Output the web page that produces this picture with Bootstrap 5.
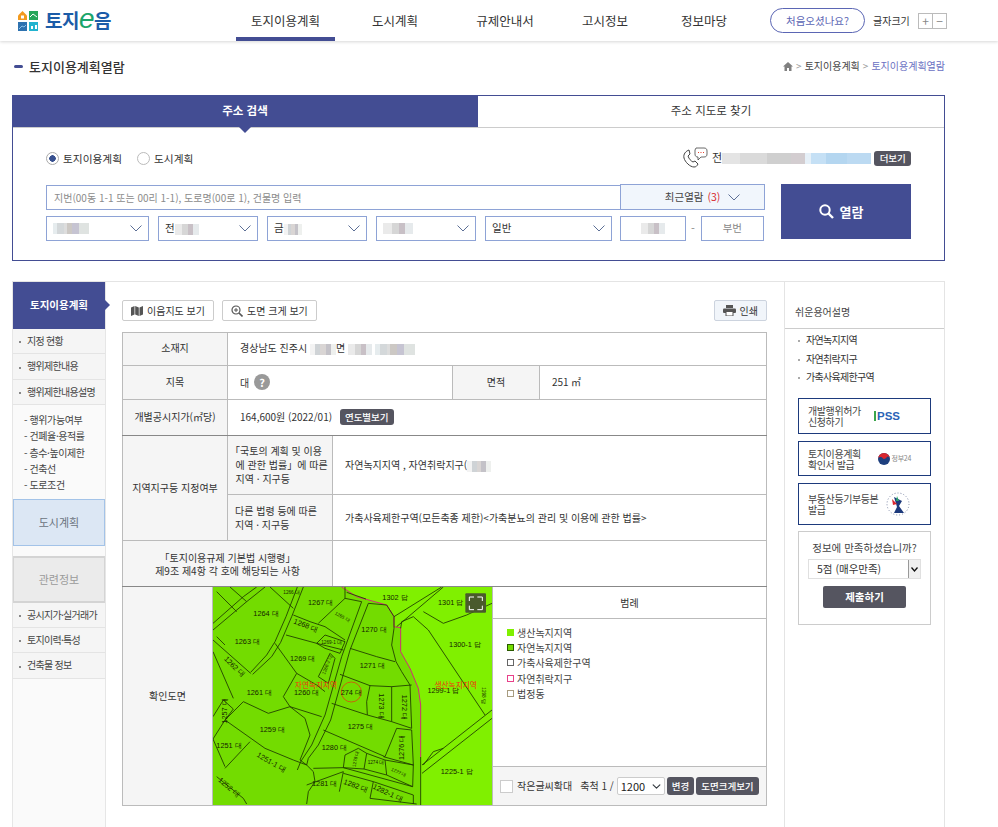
<!DOCTYPE html>
<html lang="ko">
<head>
<meta charset="utf-8">
<title>토지이용계획열람</title>
<link href="https://cdn.jsdelivr.net/npm/bootstrap@5.3.0/dist/css/bootstrap.min.css" rel="stylesheet">
<style>
html,body{height:827px;overflow:hidden}
body{font-family:"Noto Sans CJK KR","Noto Sans",sans-serif;font-size:11px;color:#333;background:#fff;line-height:1.4}
.site-head{height:41px;box-shadow:0 1px 3px rgba(0,0,0,.16);padding-left:18px;position:relative}
.brand{width:218px;color:#1b5ca8;font-size:19px;font-weight:700;letter-spacing:-.5px;text-decoration:none;gap:7px}
.brand i{font-style:italic;font-weight:400;color:#1ba56b;font-size:28px;line-height:1;font-family:"Liberation Sans",sans-serif;margin:-4px 0 0}
.gnav{width:534px;height:41px}
.gnav a{color:#333;font-size:12.5px;text-decoration:none;height:41px;line-height:41px;text-align:center;display:block}
.gnav a.on{border-bottom:4px solid #434d93}
.gn1{width:99px}.gn2{width:120px}.gn3{width:100px}.gn4{width:100px}.gn5{width:98px}
.first-btn{width:95px;height:25px;border:1px solid #5b66b4;border-radius:13px;color:#5b66b4;font-size:10.5px;line-height:23px;text-align:center;text-decoration:none}
.fs-label{font-size:10px;margin-left:8px;color:#333;width:45px}
.fs-box{width:15px;height:16px;border:1px solid #bbb;color:#888;font-size:12px;line-height:13px;text-align:center;margin-right:-1px}
.title-row{padding:18px 53px 0 14px;height:54px}
.title-row h1{font-size:13px;font-weight:500;margin:0;color:#333}
.dash{width:9px;height:3px;background:#434d93;border-radius:2px;margin-right:6px}
.crumb{font-size:10px;color:#444}
.crumb b{font-weight:400}
.crumb .sep{color:#999;margin:0 3px}
.crumb .cur{color:#6a70c2}
.search-box{margin-left:12px;width:933px;height:166px;border:1px solid #434d93;position:relative}
.tab-row{height:32px;border-bottom:1px solid #ccc}
.tab-on{width:466px;background:#434d93;color:#fff;font-weight:700;font-size:11.5px;line-height:31px;text-align:center;position:relative;height:32px;margin-left:-1px;margin-top:-1px}
.tab-on::after{content:"";position:absolute;left:50%;bottom:-6px;margin-left:-6px;border:6px solid transparent;border-bottom:0;border-top-color:#434d93}
.tab-off{flex:1;text-align:center;line-height:30px;font-size:11.5px;margin-top:-1px}
.search-body{padding:0 33px;position:relative}
.radio-row{height:56px;padding-top:4px}
.form-check-input.rad{width:13px;height:13px;margin:0 4px 0 0;border-color:#bbb;float:none}
.form-check-input.rad:checked{background-color:#fff;border-color:#aaa;background-image:radial-gradient(circle,#37508f 0 3px,transparent 3.5px)}
.radio-lab{margin-right:15px;font-size:10.7px}
.tel-row{position:absolute;left:669px;top:19px;width:242px}
.tag-dark{background:#555560;color:#fff;border-radius:3px;font-size:9.5px;font-weight:500;display:inline-block;padding:0 5px;line-height:15px}
.tel-more{margin-left:3px;height:15px;padding:0 5.5px}
.blur{display:inline-block;vertical-align:middle;height:11px;background-size:100% 100%}
.bl2{background:linear-gradient(90deg,#f3f3f3 0 20%,#cfd3d6 20% 40%,#d9d5d4 40% 60%,#c4c2c8 60% 80%,#eef0ee 80% 100%)}
.bl3{background:linear-gradient(90deg,#e6ecee 0 12%,#d4d8da 12% 30%,#ddd 30% 38%,#ccc8c4 38% 54%,#c6c4d2 54% 72%,#dfe3e1 72% 100%)}
.bl4{background:linear-gradient(90deg,#eaeaea 0 30%,#d6d6d6 30% 55%,#c8c0c6 55% 75%,#e6eaec 75% 100%)}
.bl-tel{background:linear-gradient(90deg,#e4e4e4 0 12%,#dadada 12% 30%,#cfcfcf 30% 46%,#d3cdd0 46% 56%,#e6f0f8 56% 60%,#c5e0f5 60% 70%,#b4d6f0 70% 84%,#bcdaf2 84% 100%)}
.addr-grp{width:719px;height:26px}
.addr-input{width:575px;height:25px;border:1px solid #8ea3d6;border-right:0;border-radius:0;font-size:10px;padding:0 7px;margin-top:1px;background:#fff;color:#333;min-height:0}
.addr-input::placeholder{color:#8b8b8b}
.recent{width:145px;height:26px;border:1px solid #8ea3d6;background:#f1f6fc;font-size:10.5px;color:#444;border-radius:0;padding:0 0 0 20px}
.recent em{font-style:normal;color:#d8262e;margin:0 8px 0 1px}
.fld-row{gap:9px;margin-top:6px;width:719px}
.sel{height:25px;border:1px solid #8ea3d6;border-radius:0;font-size:10.5px;padding:0 6px;color:#333;display:flex;align-items:center;background:#fff;justify-content:space-between}
.s1{width:103px}.s2,.s3,.s4{width:100px}.s5{width:127px}
.s6{width:66px;justify-content:center;margin-left:-1px}
.s7{width:63px;justify-content:center;color:#888}
.dashc{color:#888;margin:0 -3px 0 -4px;line-height:25px}
.go-btn{position:absolute;left:768px;top:56px;width:130px;height:55px;background:#434d93;color:#fff;font-size:13px;font-weight:700;border:0;border-radius:0;gap:6px;padding:0 10px 0 0}
.go-btn:hover{background:#434d93;color:#fff}
.main-wrap{margin:20px 0 0 12px;width:933px;height:546px;border-top:1px solid #e4e4e4}
.side{width:94px;background:#fafafa;border-left:1px solid #e6e6e6;border-right:1px solid #e6e6e6}
.side-head{height:47px;background:#434d93;color:#fff;font-weight:700;font-size:10.5px;line-height:45px;text-align:center;position:relative}
.side-head::after{content:"";position:absolute;right:-5px;top:18px;border:5px solid transparent;border-right:0;border-left-color:#434d93}
.side-it{height:25.3px;background:#f5f5f5;border-bottom:1px solid #e4e4e4;font-size:10px;letter-spacing:-.7px;line-height:24px;color:#444;padding-left:6px;white-space:nowrap}
.side-it::before{content:"";display:inline-block;width:2px;height:2px;background:#888;margin-right:6px;vertical-align:middle}
.sub-list{padding:7px 0 0 11px;height:94px;margin:0}
.sub-list li{height:16.4px;font-size:10px;letter-spacing:-.4px;line-height:16.4px;color:#444;white-space:nowrap}
.box-city{height:47px;background:#dce7f4;border:1px solid #a3c3e8;color:#6b7480;font-size:11px;text-align:center;line-height:45px}
.box-rel{height:47px;background:#ebebeb;border:1px solid #d4d4d4;border-width:2px 1px;color:#9a9a9a;font-size:11px;text-align:center;line-height:43px;margin-top:10px}
.center-col{width:678px;padding:18px 17px 0 16px}
.tool-row{height:32px;margin-bottom:0}
.tool-btn{height:21px;background:#fff;border:1px solid #ccc;border-radius:2px;font-size:10px;padding:0 8px;color:#333;gap:4px;line-height:1}
.tool-btn.print{background:#f1f5fa;border-color:#ccd3de;padding:0 8px}
.info-tbl{width:645px;table-layout:fixed;border-collapse:collapse;margin:0;font-size:10px;border:1px solid #bbb;border-top:1px solid #888}
.info-tbl th,.info-tbl td{border:1px solid #bbb;padding:0 12px;vertical-align:middle;font-weight:400;color:#333;line-height:14px}
.info-tbl th{background:#f5f5f5;text-align:center;padding:0 4px;--bs-table-bg:#f5f5f5}
.info-tbl tr.lift th,.info-tbl tr.lift td{padding-bottom:2px}
.info-tbl th.lft{text-align:left;padding-left:7px;white-space:nowrap}
.info-tbl th.tight{line-height:13px}
.info-tbl td.dk,.info-tbl th.dk{border-bottom-color:#888}
.info-tbl .maprow{padding:0;border-top-color:#888}
.qmark{display:inline-block;width:16px;height:16px;border-radius:50%;background:#999;color:#fff;font-weight:700;text-align:center;line-height:16px;font-size:11px;margin-left:2px}
.price-tag{line-height:16px;margin-left:5px}
.map-grid{display:grid;grid-template-columns:90px 279px 1fr;height:218px}
.map-lab{background:#f5f5f5;display:flex;align-items:center;justify-content:center;border-right:1px solid #bbb}
.map-pic{display:block;width:279px;height:218px;background:#80f000}
.legend{border-left:1px solid #bbb;display:flex;flex-direction:column}
.leg-head{height:32px;line-height:31px;text-align:center;border-bottom:1px solid #bbb}
.leg-list{flex:1;padding:6px 0 0 14px;margin:0}
.leg-list li{height:15.2px;line-height:15px;display:flex;align-items:center;color:#444}
.sw{width:7px;height:7px;margin-right:3px;display:inline-block;border:1px solid}
.leg-foot{height:39px;background:#f5f5f5;border-top:1px solid #bbb;padding-left:7px;white-space:nowrap}
.leg-check{width:13px;height:13px;border:1px solid #ccc;background:#fff;margin-right:4px}
.scale-sel{width:48px;height:18px;font-size:11px;margin:0 0 0 3px;padding:0 0 0 3px;border:1px solid #ccc;border-radius:2px;background-color:#fff;background-position:right 3px center;background-size:9px;min-height:0;color:#222}
.scale-txt{margin-left:8px}
.leg-foot .tag-dark{border-radius:3px;line-height:18px;height:18px;margin-left:2px;padding:0 5px;font-size:9.5px;flex-shrink:0}
.right-col{width:161px;border-left:1px solid #e4e4e4;border-right:1px solid #e4e4e4}
.easy-head{height:47px;border-bottom:1px solid #ccc;padding:22px 0 0 10px;font-size:10px;color:#444;line-height:16px}
.easy-list{padding:2px 0 0 13px;margin:0 0 7px;height:62px}
.easy-list li{height:18.6px;line-height:18.6px;font-size:10px;letter-spacing:-.7px;color:#333;white-space:nowrap}
.easy-list li::before{content:"";display:inline-block;width:2px;height:2px;background:#aaa;margin-right:6px;vertical-align:middle}
.ext-link{margin:0 0 7px 13px;width:133px;border:1px solid #1d3a7c;padding:0 8px 0 9px;font-size:10px;letter-spacing:-.4px;line-height:11px;color:#444;text-decoration:none;justify-content:space-between}
.e1{height:36px}.e2{height:35px}.e3{height:42px;margin-bottom:6px}
.ipss{color:#2a63b7;font-family:"Liberation Sans",sans-serif;font-weight:700;font-size:11.5px;letter-spacing:0;border-left:2px solid #3aa54b;padding-left:1px;line-height:10px;margin-right:22px}
.gov24{font-size:7px;color:#888;gap:2px;white-space:nowrap;letter-spacing:-.3px;margin-right:11px}
.reg-logo{margin-right:12px;flex-shrink:0}
.sat-box{margin-left:13px;width:133px;height:94px;border:1px solid #ccc;padding:8px 9px;text-align:center}
.sat-box p{font-size:10.5px;margin:0 0 2px;line-height:16px;color:#444;white-space:nowrap}
.sat-sel{height:20px;font-size:10.5px;padding:0 0 0 8px;border:1px solid #e0e0e0;border-radius:0;width:113px;min-height:0;margin-top:3px;color:#333;display:flex;align-items:center;justify-content:space-between;text-align:left}
.sat-arrow{width:12px;height:18px;background:#f0f0f0;border-left:1px solid #999;display:flex;align-items:center;justify-content:center}
.sat-go{width:83px;height:22px;margin-top:7px;background:#555560;color:#fff;border:0;border-radius:2px;font-size:10.5px;font-weight:700;padding:0}
.sat-go:hover{background:#555560;color:#fff}
.mt{font-family:"Liberation Sans",sans-serif;font-size:22px;fill:#141f00;text-anchor:middle}
.ms{font-size:14px}
.mr{font-family:"Noto Sans CJK KR",sans-serif;font-size:23px;fill:#f03010;text-anchor:middle}
.ml{fill:none;stroke:#1f3b00;stroke-width:2.6}
</style>
</head>
<body>
<header class="site-head d-flex align-items-center">
  <a class="brand d-flex align-items-center" href="#">
    <svg width="20" height="20" viewBox="0 0 20 20"><path d="M0 4.500 4.500 0 9 4.500V9H0z" fill="#f39a1e"/><rect x="3" y="4.500" width="3" height="3" fill="#fff"/><rect x="11" y="0" width="9" height="9" fill="#27a65a"/><path d="M12 6l3-3 4 3" fill="none" stroke="#fff"/><rect x="0" y="11" width="9" height="9" fill="#2e72b0"/><path d="M1 18l3-3 2 1 2-2" fill="none" stroke="#8cc0e8"/><rect x="11" y="11" width="9" height="9" fill="#22b3cf"/><path d="M13 15h2v3h-2zM17 14h2v4h-2z" fill="#fff"/></svg>
    <span class="d-flex align-items-center">토지<i>e</i>음</span>
  </a>
  <nav class="gnav d-flex">
    <a class="gn1 on" href="#">토지이용계획</a>
    <a class="gn2" href="#">도시계획</a>
    <a class="gn3" href="#">규제안내서</a>
    <a class="gn4" href="#">고시정보</a>
    <a class="gn5" href="#">정보마당</a>
  </nav>
  <a class="first-btn" href="#">처음오셨나요?</a>
  <span class="fs-label">글자크기</span>
  <span class="fs-box">+</span><span class="fs-box">−</span>
</header>

<div class="title-row d-flex justify-content-between align-items-start">
  <div class="d-flex align-items-center"><span class="dash"></span><h1>토지이용계획열람</h1></div>
  <div class="crumb d-flex align-items-center">
    <svg width="10" height="9" viewBox="0 0 10 9"><path d="M5 0 10 4.500H8.500V9H6V6H4v3H1.500V4.500H0z" fill="#808080"/></svg>
    <span class="sep">&gt;</span><b>토지이용계획</b><span class="sep">&gt;</span><span class="cur">토지이용계획열람</span>
  </div>
</div>

<section class="search-box">
  <div class="tab-row d-flex">
    <div class="tab-on">주소 검색</div>
    <div class="tab-off">주소 지도로 찾기</div>
  </div>
  <div class="search-body">
    <div class="radio-row d-flex align-items-center">
      <input class="form-check-input rad" type="radio" name="kind" checked><span class="radio-lab">토지이용계획</span>
      <input class="form-check-input rad" type="radio" name="kind"><span class="radio-lab">도시계획</span>
    </div>
    <div class="tel-row d-flex align-items-center">
      <svg width="26" height="22" viewBox="0 0 26 22" class="me-1 flex-shrink-0"><path d="M7 3C4 4 1 7 2 11s6 9 10 9c2 0 3-1 4-3l-3-3-2 1c-2-1-4-3-5-6l2-2z" fill="none" stroke="#444" stroke-width="1"/><path d="M14 1h8c2 0 3 1 3 3v3c0 2-1 3-3 3h-3l-3 3v-3c-2 0-3-1-3-3V3z" fill="#fff" stroke="#444" stroke-width=".8"/><path d="M16 5.500h1M18.500 5.500h1M21 5.500h1" stroke="#e8432e" stroke-width="1.200"/></svg>
      <span>전</span><span class="blur bl-tel" style="width:149px"></span>
      <span class="tag-dark tel-more">더보기</span>
    </div>
    <div class="addr-grp d-flex">
      <input class="form-control addr-input" type="text" placeholder="지번(00동 1-1 또는 00리 1-1), 도로명(00로 1), 건물명 입력">
      <button class="btn recent d-flex align-items-center justify-content-center" type="button">최근열람&nbsp;<em>(3)</em>
        <svg width="12" height="7" viewBox="0 0 12 7"><path d="M.5.500 6 6 11.500.500" fill="none" stroke="#5c6f96"/></svg></button>
    </div>
    <div class="fld-row d-flex">
      <div class="sel s1"><span class="blur bl3" style="width:36px"></span><svg width="12" height="7" viewBox="0 0 12 7"><path d="M.5.500 6 6 11.500.500" fill="none" stroke="#5c6f96"/></svg></div>
      <div class="sel s2"><span>전<span class="blur bl4" style="width:24px"></span></span><svg width="12" height="7" viewBox="0 0 12 7"><path d="M.5.500 6 6 11.500.500" fill="none" stroke="#5c6f96"/></svg></div>
      <div class="sel s3"><span>금<span class="blur bl2" style="width:18px"></span></span><svg width="12" height="7" viewBox="0 0 12 7"><path d="M.5.500 6 6 11.500.500" fill="none" stroke="#5c6f96"/></svg></div>
      <div class="sel s4"><span class="blur bl4" style="width:30px"></span><svg width="12" height="7" viewBox="0 0 12 7"><path d="M.5.500 6 6 11.500.500" fill="none" stroke="#5c6f96"/></svg></div>
      <div class="sel s5"><span>일반</span><svg width="12" height="7" viewBox="0 0 12 7"><path d="M.5.500 6 6 11.500.500" fill="none" stroke="#5c6f96"/></svg></div>
      <div class="sel s6"><span class="blur bl4" style="width:24px"></span></div>
      <span class="dashc">-</span>
      <div class="sel s7">부번</div>
    </div>
    <button class="btn go-btn d-flex align-items-center justify-content-center" type="button">
      <svg width="15" height="15" viewBox="0 0 15 15"><circle cx="6" cy="6" r="4.700" fill="none" stroke="#fff" stroke-width="2"/><path d="M9.500 9.500 14 14" stroke="#fff" stroke-width="2.400"/></svg>열람
    </button>
  </div>
</section>

<div class="main-wrap d-flex">
  <aside class="side flex-shrink-0">
    <div class="side-head">토지이용계획</div>
    <div class="side-it">지정 현황</div>
    <div class="side-it">행위제한내용</div>
    <div class="side-it">행위제한내용설명</div>
    <ul class="sub-list list-unstyled">
      <li>- 행위가능여부</li><li>- 건폐율·용적률</li><li>- 층수·높이제한</li><li>- 건축선</li><li>- 도로조건</li>
    </ul>
    <div class="box-city">도시계획</div>
    <div class="box-rel">관련정보</div>
    <div class="side-it">공시지가·실거래가</div>
    <div class="side-it">토지이력·특성</div>
    <div class="side-it">건축물 정보</div>
  </aside>

  <main class="center-col flex-shrink-0">
    <div class="tool-row d-flex justify-content-between align-items-start">
      <div class="d-flex gap-2">
        <button class="btn tool-btn d-flex align-items-center" type="button"><svg width="12" height="10" viewBox="0 0 12 10"><path d="M0 1.500 3.500 0v8.500L0 10zM4.200 0 7.800 1.500V10L4.200 8.500zM8.500 1.500 12 0v8.500L8.500 10z" fill="#555"/></svg>이음지도 보기</button>
        <button class="btn tool-btn d-flex align-items-center" type="button"><svg width="12" height="12" viewBox="0 0 12 12"><circle cx="5" cy="5" r="4" fill="none" stroke="#555" stroke-width="1.200"/><path d="M8 8l3.500 3.500" stroke="#555" stroke-width="1.600"/><path d="M3 5h4M5 3v4" stroke="#555"/></svg>도면 크게 보기</button>
      </div>
      <button class="btn tool-btn print d-flex align-items-center" type="button"><svg width="13" height="11" viewBox="0 0 13 11"><rect x="3" y="0" width="7" height="3" fill="#555"/><rect x="0" y="3.500" width="13" height="4.500" rx="1" fill="#555"/><rect x="3" y="6.500" width="7" height="4.500" fill="#fff" stroke="#555"/></svg>인쇄</button>
    </div>
    <table class="table info-tbl">
      <colgroup><col style="width:105px"><col style="width:105px"><col style="width:120px"><col style="width:87px"><col></colgroup>
      <tbody>
        <tr class="lift" style="height:33px"><th>소재지</th><td colspan="4">경상남도 진주시 <span class="blur bl2" style="width:26px"></span>면 <span class="blur bl4" style="width:24px"></span> <span class="blur bl3" style="width:40px"></span></td></tr>
        <tr class="lift" style="height:34px"><th>지목</th><td colspan="2">대 <span class="qmark">?</span></td><th>면적</th><td>251 ㎡</td></tr>
        <tr class="lift" style="height:36px"><th class="dk">개별공시지가(㎡당)</th><td class="dk" colspan="4">164,600원 (2022/01) <span class="tag-dark price-tag">연도별보기</span></td></tr>
        <tr style="height:59px"><th rowspan="2">지역지구등 지정여부</th><th class="lft" style="padding-left:2px">「국토의 계획 및 이용<br>&nbsp;&nbsp;에 관한 법률」에 따른<br>&nbsp;&nbsp;지역 · 지구등</th><td colspan="3">자연녹지지역 , 자연취락지구(<span class="blur bl2" style="width:24px"></span></td></tr>
        <tr style="height:46px"><th class="lft">다른 법령 등에 따른<br>지역 · 지구등</th><td colspan="3">가축사육제한구역(모든축종 제한)&lt;가축분뇨의 관리 및 이용에 관한 법률&gt;</td></tr>
        <tr style="height:46px"><th class="dk tight" colspan="2">「토지이용규제 기본법 시행령」<br>제9조 제4항 각 호에 해당되는 사항</th><td class="dk" colspan="3"></td></tr>
        <tr><td class="maprow" colspan="5">
          <div class="map-grid">
            <div class="map-lab">확인도면</div>
            <svg class="map-pic" viewBox="9 6 837 654" preserveAspectRatio="none" role="img" aria-label="확인도면 지도">
              <rect x="0" y="0" width="860" height="660" fill="#80f000"/>
              <path d="M395 6 440 35 530 60 552 95V125L572 128V200L600 250 625 310 632 360V660H9V6z" fill="#73dc00"/>
              <path class="ml" d="M395 6 440 35 530 60 552 95V125L572 128V200L600 250 625 310 632 360V516" style="stroke:#e0108a"/>
              <path class="ml" d="M632 516V660"/>
              <g class="ml">
                <path d="M262 6 228 95 195 170 170 210 122 262M280 6 245 95 212 172 185 215 128 268"/>
                <path d="M9 135 110 50 165 6M9 115 100 35 140 6M20 20 80 80M60 6 110 50"/>
                <path d="M180 6 250 70M9 165 122 265M20 155 45 180"/>
                <path d="M455 50 395 215 345 390 305 480 272 530 262 555M475 55 420 195 362 405 325 480 295 520 290 540 310 560 315 590 295 620 290 657"/>
                <path d="M405 6V40L325 115M405 40 455 50M410 22 468 42"/>
                <path d="M228 150 320 175 400 195M250 90 300 110 345 125 405 165"/>
                <path d="M320 175 345 150 405 170 390 205 345 190 320 175"/>
                <path d="M195 175 260 265 320 300 345 320M260 265 220 335 240 365 335 395"/>
                <path d="M360 205 325 275 355 295 375 220z"/>
                <path d="M420 190 500 215 555 230M475 55 530 60 552 95 552 130 545 180 558 230 575 260 600 300 605 430"/>
                <path d="M390 268 480 302 545 305 605 300M480 302 470 350 472 390M545 305 545 410"/>
                <path d="M365 355 472 390 545 410 605 430"/>
                <path d="M340 435 525 515 560 430 605 435 610 540 520 515"/>
                <path d="M405 510 400 548M405 510 445 490 470 505 462 552 400 548M470 505 525 525 530 570 462 552M525 525 610 540 608 605 530 570"/>
                <path d="M310 550 400 548 608 605M290 600 400 560 388 620M400 565 490 590 480 640 620 657M490 590 610 630 610 657"/>
                <path d="M45 405 100 350 175 385 240 365 285 400 300 450 270 525 290 540M45 405 165 490 250 525 290 540"/>
                <path d="M9 395 40 345 70 372 45 405 9 462 45 545M120 470 45 550M20 575 100 640 110 657"/>
                <path d="M9 200 70 340"/>
                <path d="M552 95 695 6M560 125 700 6M575 110 610 95 655 135 825 390M575 110 572 130M640 80 700 115 770 90 846 55"/>
                <path d="M636 540 846 375M636 565 846 400M640 540 670 500 700 490"/>
              </g>
              <circle cx="424" cy="321" r="30" fill="none" stroke="#f02a10" stroke-width="2"/>
              <g>
                <text class="mt" x="168" y="92">1264 대</text><text class="mt" x="112" y="177">1263 대</text>
                <text class="mt" transform="translate(68 250) rotate(45)">1262 대</text><text class="mt" x="148" y="330">1261 대</text>
                <text class="mt" x="290" y="330">1260 대</text><text class="mt" x="187" y="440">1259 대</text>
                <text class="mt" x="57" y="490">1251 대</text><text class="mt" transform="translate(180 538) rotate(30)">1251-1 대</text>
                <text class="mt" transform="translate(52 612) rotate(40)">1252 대</text><text class="mt" transform="translate(52 378) rotate(-90)">1257 대</text>
                <text class="mt" x="332" y="60">1267 대</text><text class="mt" transform="translate(285 128) rotate(20)">1268 대</text>
                <text class="mt" x="278" y="227">1269 대</text><text class="mt" x="492" y="140">1270 대</text>
                <text class="mt" x="487" y="248">1271 대</text><text class="mt" x="424" y="330">274 대</text>
                <text class="mt" transform="translate(507 363) rotate(90)">1273 대</text><text class="mt" transform="translate(577 367) rotate(90)">1272 대</text>
                <text class="mt" x="451" y="431">1275 대</text><text class="mt" x="373" y="494">1280 대</text>
                <text class="mt" x="344" y="604">1281 대</text><text class="mt" transform="translate(435 609) rotate(20)">1282 대</text>
                <text class="mt" transform="translate(530 630) rotate(25)">1282-1 대</text><text class="mt" transform="translate(583 487) rotate(-90)">1276 대</text>
                <text class="mt ms" transform="translate(565 567) rotate(25)">1277 대</text><text class="mt" x="555" y="46">1302 답</text>
                <text class="mt" x="722" y="61">1301 답</text><text class="mt" x="765" y="187">1300-1 답</text>
                <text class="mt" x="700" y="324">1299-1 답</text><text class="mt" x="740" y="568">1225-1 답</text>
                <text class="mt ms" x="245" y="27">1266 대</text><text class="mt ms" transform="translate(395 100) rotate(30)">1265 대</text>
                <text class="mt ms" x="365" y="177">1269-1 대</text><text class="mt ms" transform="translate(356 240) rotate(-70)">1268-2 대</text>
                <text class="mt ms" transform="translate(441 522) rotate(-80)">1278 대</text><text class="mt ms" x="498" y="537">1274 대</text>
                <text class="mt ms" transform="translate(817 332) rotate(90)">1298 답</text>
                <text class="mr" x="318" y="310">자연녹지지역</text><text class="mr" x="737" y="309">생산녹지지역</text>
              </g>
              <rect x="766" y="25" width="62" height="58" rx="3" fill="#4a5a2c"/>
              <path d="M778 48V36H792M802 36H817V48M817 62V74H802M792 74H778V62" fill="none" stroke="#fff" stroke-width="3"/>
            </svg>
            <div class="legend">
              <div class="leg-head">범례</div>
              <ul class="leg-list list-unstyled">
                <li><span class="sw" style="background:#80f000;border-color:#80f000"></span>생산녹지지역</li>
                <li><span class="sw" style="background:#73dc00;border-color:#2a5a00"></span>자연녹지지역</li>
                <li><span class="sw" style="background:#fff;border-color:#666"></span>가축사육제한구역</li>
                <li><span class="sw" style="background:#fff;border-color:#e8408a"></span>자연취락지구</li>
                <li><span class="sw" style="background:#fff;border-color:#a89c80"></span>법정동</li>
              </ul>
              <div class="leg-foot d-flex align-items-center">
                <span class="leg-check"></span>작은글씨확대<span class="scale-txt">축척 1 /</span>
                <select class="form-select scale-sel"><option>1200</option></select>
                <span class="tag-dark">변경</span><span class="tag-dark">도면크게보기</span>
              </div>
            </div>
          </div>
        </td></tr>
      </tbody>
    </table>
  </main>

  <aside class="right-col flex-shrink-0">
    <div class="easy-head">쉬운용어설명</div>
    <ul class="easy-list list-unstyled">
      <li>자연녹지지역</li><li>자연취락지구</li><li>가축사육제한구역</li>
    </ul>
    <a class="ext-link e1 d-flex align-items-center" href="#"><span>개발행위허가<br>신청하기</span><span class="ipss">PSS</span></a>
    <a class="ext-link e2 d-flex align-items-center" href="#"><span>토지이용계획<br>확인서 발급</span><span class="gov24 d-flex align-items-center"><svg width="12" height="12" viewBox="0 0 12 12"><circle cx="6" cy="6" r="6" fill="#1d3f7e"/><path d="M0 6a6 6 0 0 1 12 0c0-2-2-3-3-2s-2 2-3 2-2-2-3-2-3 0-3 2z" fill="#d8262e"/></svg>정부24</span></a>
    <a class="ext-link e3 d-flex align-items-center" href="#"><span>부동산등기부등본<br>발급</span><svg class="reg-logo" width="24" height="24" viewBox="0 0 24 24"><circle cx="12" cy="12" r="11" fill="none" stroke="#7f8aa8" stroke-dasharray="1 2"/><path d="M8 5l8 4-3 5 5 7H8l3-6z" fill="#1d3a7c"/><path d="M6 7l5 5-4 1z" fill="#d8262e"/><path d="M11 4l2 5-3 0z" fill="#2aa66a"/></svg></a>
    <div class="sat-box">
      <p>정보에 만족하셨습니까?</p>
      <div class="sat-sel"><span>5점 (매우만족)</span><span class="sat-arrow"><svg width="7" height="5" viewBox="0 0 7 5"><path d="M.5.500 3.500 4 6.500.500" fill="none" stroke="#111" stroke-width="1.300"/></svg></span></div>
      <button class="btn sat-go" type="button">제출하기</button>
    </div>
  </aside>
</div>
<script src="https://cdn.jsdelivr.net/npm/bootstrap@5.3.0/dist/js/bootstrap.bundle.min.js"></script>
</body>
</html>
